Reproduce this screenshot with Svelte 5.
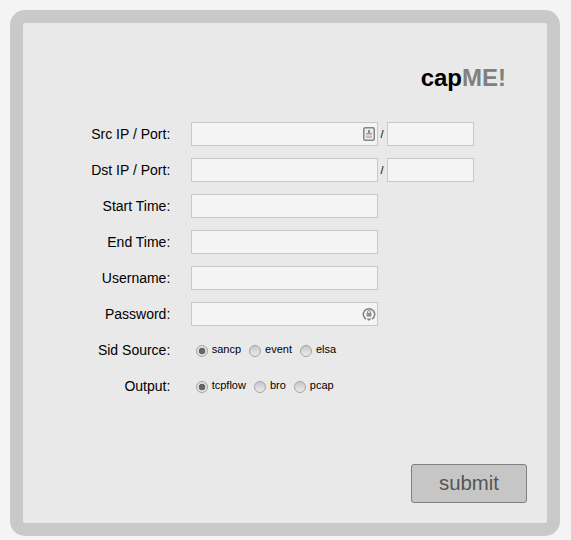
<script>
  const fields = [
    { label: 'Src IP / Port:', port: true, icon: 'id' },
    { label: 'Dst IP / Port:', port: true },
    { label: 'Start Time:' },
    { label: 'End Time:' },
    { label: 'Username:' },
    { label: 'Password:', icon: 'lock', type: 'password' }
  ];
  const radios = [
    { label: 'Sid Source:', name: 'sid', options: ['sancp', 'event', 'elsa'] },
    { label: 'Output:', name: 'output', options: ['tcpflow', 'bro', 'pcap'] }
  ];
</script>

<div class="card">
  <h1 class="logo">cap<span>ME!</span></h1>
  <form class="form">
    {#each fields as f}
      <div class="row">
        <label class="label" for={f.label}>{f.label}</label>
        <div class="control">
          <div class="main">
            <input id={f.label} type={f.type ?? 'text'} />
            {#if f.icon === 'id'}
              <svg class="icon id" width="12" height="14" viewBox="0 0 12 14">
                <rect x="0.75" y="0.75" width="10.5" height="12.5" rx="1.5" fill="#ececec" stroke="#858585" stroke-width="1.5" />
                <rect x="5" y="3" width="2" height="3" fill="#8a8a8a" />
                <rect x="3" y="6" width="6" height="1.5" fill="#a0a0a0" />
                <rect x="3" y="8.5" width="6" height="2.5" fill="#c0c0c0" />
              </svg>
            {:else if f.icon === 'lock'}
              <svg class="icon lock" width="14" height="14" viewBox="0 0 14 14">
                <path d="M4 12.2A5.7 5.7 0 1 1 10 12.2" fill="none" stroke="#808080" stroke-width="1.5" />
                <path d="M4.5 11.5h5L7 14z" fill="#808080" />
                <rect x="4.6" y="5.8" width="4.8" height="3.8" fill="#909090" />
                <path d="M5.5 6V5a1.5 1.5 0 0 1 3 0v1" fill="none" stroke="#909090" stroke-width="1" />
              </svg>
            {/if}
          </div>
          {#if f.port}
            <span class="slash">/</span>
            <input class="port" type="text" aria-label="Port" />
          {/if}
        </div>
      </div>
    {/each}
    {#each radios as r}
      <div class="row">
        <span class="label">{r.label}</span>
        <div class="radios">
          {#each r.options as opt, i}
            <label class="radio">
              <input type="radio" name={r.name} value={opt} checked={i === 0} />
              <span>{opt}</span>
            </label>
          {/each}
        </div>
      </div>
    {/each}
  </form>
  <div class="actions">
    <button type="button">submit</button>
  </div>
</div>

<style>
  :global(body) {
    margin: 0;
    background: #f4f4f4;
  }
  .card {
    box-sizing: border-box;
    width: 550px;
    height: 526px;
    margin: 10px 0 0 10px;
    border: 13px solid #c9c9c9;
    border-radius: 15px;
    background: #e9e9e9;
    font-family: "Liberation Sans", Arial, sans-serif;
    color: #000;
    display: flex;
    flex-direction: column;
  }
  .logo {
    margin: 40px 41px 0 0;
    height: 29px;
    line-height: 29px;
    font-size: 24px;
    font-weight: bold;
    text-align: right;
  }
  .logo span {
    color: #808080;
  }
  .form {
    margin-top: 24px;
    display: flex;
    flex-direction: column;
  }
  .row {
    height: 36px;
    display: flex;
    align-items: center;
  }
  .label {
    width: 147.3px;
    margin-right: 0.7px;
    font-size: 14px;
    text-align: right;
    flex: none;
  }
  .control {
    margin-left: 20px;
    display: flex;
    align-items: center;
  }
  .main {
    position: relative;
    display: flex;
  }
  input[type='text'],
  input[type='password'] {
    box-sizing: border-box;
    width: 187px;
    height: 24px;
    margin: 0;
    border: 1px solid #c8c8c8;
    background: #f4f4f4;
    outline: none;
    padding: 0 4px;
  }
  input.port {
    width: 87px;
  }
  .slash {
    width: 8px;
    margin-right: 1px;
    font-size: 11px;
    text-align: center;
  }
  .icon {
    position: absolute;
    top: 5px;
  }
  .icon.id {
    right: 3px;
  }
  .icon.lock {
    right: 2px;
  }
  .radios {
    margin-left: 25px;
    display: flex;
    gap: 8px;
  }
  .radio {
    display: flex;
    align-items: center;
    gap: 4px;
    font-size: 11px;
  }
  .radio span {
    position: relative;
    top: -1px;
    left: -0.3px;
  }
  input[type='radio'] {
    appearance: none;
    box-sizing: border-box;
    width: 12px;
    height: 12px;
    margin: 1px 0 0;
    border: 1px solid #a4a4a4;
    border-radius: 50%;
    background: linear-gradient(#c8c8c8, #ececec);
  }
  input[type='radio']:checked {
    background: radial-gradient(circle, #666 0 3px, #e0e0e0 3.6px);
  }
  .actions {
    margin-top: auto;
    padding: 0 20px 20px 0;
    display: flex;
    justify-content: flex-end;
  }
  button {
    box-sizing: border-box;
    width: 116px;
    height: 39px;
    padding: 0;
    border: 1px solid #808080;
    border-radius: 3px;
    background: #c6c6c6;
    color: #555;
    font-family: inherit;
    font-size: 20.4px;
  }
</style>
